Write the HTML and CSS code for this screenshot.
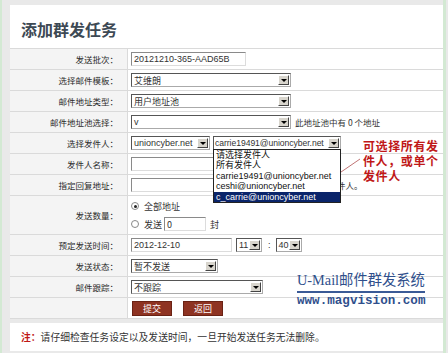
FILE: index.html
```html
<!DOCTYPE html>
<html lang="zh-CN">

<head>
    <meta charset="UTF-8">
    <title>添加群发任务</title>
    <link rel="stylesheet" href="styles.css">
</head>

<body>
    <div class="page">
        <div class="panel">
            <h1 class="title">添加群发任务</h1>
            <div class="form">
                <div class="row">
                    <div class="lbl">发送批次：</div>
                    <div class="val"><span class="inp w115">20121210-365-AAD65B</span></div>
                </div>
                <div class="row">
                    <div class="lbl">选择邮件模板：</div>
                    <div class="val"><span class="sel w160"><span class="txt">艾维朗</span><span class="arr"></span></span></div>
                </div>
                <div class="row">
                    <div class="lbl">邮件地址类型：</div>
                    <div class="val"><span class="sel w160"><span class="txt">用户地址池</span><span class="arr"></span></span></div>
                </div>
                <div class="row">
                    <div class="lbl">邮件地址池选择：</div>
                    <div class="val">
                        <span class="sel w160"><span class="txt">v</span><span class="arr"></span></span>
                        <span class="tip">此地址池中有 0 个地址</span>
                    </div>
                </div>
                <div class="row">
                    <div class="lbl">选择发件人：</div>
                    <div class="val">
                        <span class="sel w79"><span class="txt">unioncyber.net</span><span class="arr"></span></span>
                        <span class="drop-wrap">
                            <span class="sel w128"><span class="txt tight">carrie19491@unioncyber.net</span><span class="arr"></span></span>
                            <span class="drop">
                                <span class="opt">请选择发件人</span>
                                <span class="opt">所有发件人</span>
                                <span class="opt">carrie19491@unioncyber.net</span>
                                <span class="opt">ceshi@unioncyber.net</span>
                                <span class="opt on">c_carrie@unioncyber.net</span>
                            </span>
                        </span>
                    </div>
                </div>
                <div class="row">
                    <div class="lbl">发件人名称：</div>
                    <div class="val"><span class="inp w168"></span></div>
                </div>
                <div class="row">
                    <div class="lbl">指定回复地址：</div>
                    <div class="val"><span class="inp w168"></span><span class="tip">默认为发件人。</span></div>
                </div>
                <div class="row tall">
                    <div class="lbl">发送数量：</div>
                    <div class="val stack">
                        <div class="line"><span class="radio on"></span>全部地址</div>
                        <div class="line"><span class="radio"></span>发送 <span class="inp w42">0</span> 封</div>
                    </div>
                </div>
                <div class="row">
                    <div class="lbl">预定发送时间：</div>
                    <div class="val">
                        <span class="inp w101">2012-12-10</span>
                        <span class="sel w26"><span class="txt">11</span><span class="arr"></span></span>
                        <span class="colon">:</span>
                        <span class="sel w26"><span class="txt">40</span><span class="arr"></span></span>
                    </div>
                </div>
                <div class="row">
                    <div class="lbl">发送状态：</div>
                    <div class="val"><span class="sel w87"><span class="txt">暂不发送</span><span class="arr"></span></span></div>
                </div>
                <div class="row">
                    <div class="lbl">邮件跟踪：</div>
                    <div class="val"><span class="sel w132"><span class="txt">不跟踪</span><span class="arr"></span></span></div>
                </div>
                <div class="row">
                    <div class="lbl"></div>
                    <div class="val"><span class="btn">提交</span><span class="btn">返回</span></div>
                </div>
            </div>

            <!-- 标注 -->
            <div class="mark">可选择所有发<br>件人，或单个<br>发件人</div>
            <svg class="pointer" width="40" height="30" viewBox="0 0 40 30">
                <line x1="2" y1="27" x2="37" y2="3"></line>
            </svg>

            <div class="logo">
                <div class="logo-name"><span class="en">U-Mail</span>邮件群发系统</div>
                <div class="logo-url">www.magvision.com</div>
            </div>
        </div>

        <div class="note"><b>注：</b>请仔细检查任务设定以及发送时间，一旦开始发送任务无法删除。</div>
    </div>
</body>

</html>
```

FILE: styles.css
```css
html,
body {
    margin: 0;
    padding: 0;
    height: 100%;
}

body {
    background: #e9e9e9;
    font-family: "Liberation Sans", "Noto Sans CJK SC", sans-serif;
    color: #333;
    overflow: hidden;
}

.page {
    margin-right: 2px;
    height: 353px;
    box-sizing: border-box;
    padding: 5px 0 0 8px;
    border-left: 2px solid #d3e9d3;
    border-right: 3px solid #d3e9d3;
}

.panel {
    position: relative;
    background: #fff;
}

.title {
    margin: 0;
    height: 43px;
    padding: 15px 0 0 11px;
    box-sizing: border-box;
    font-family: "Noto Sans CJK SC", sans-serif;
    font-size: 16px;
    line-height: 18px;
    font-weight: 700;
    color: #3d4954;
}

.form {
    border-top: 1px solid #dadada;
}

.row {
    display: flex;
    height: 21px;
    box-sizing: border-box;
    border-bottom: 1px solid #dadada;
}

.row.tall {
    height: 39px;
}

.lbl {
    width: 118px;
    flex: none;
    box-sizing: border-box;
    background: #f4f4f4;
    border-right: 1px solid #dadada;
    padding-right: 9px;
    font-family: "Noto Sans CJK SC", sans-serif;
    font-size: 8.5px;
    color: #2a2a2a;
    display: flex;
    align-items: center;
    justify-content: flex-end;
}

.val {
    flex: 1;
    display: flex;
    align-items: center;
    padding-left: 3px;
    font-size: 9px;
}

.val.stack {
    flex-direction: column;
    align-items: flex-start;
    justify-content: center;
    gap: 3px;
    font-family: "Noto Sans CJK SC", sans-serif;
}

.line {
    display: flex;
    align-items: center;
    height: 15px;
}

/* 输入框 */
.inp {
    display: inline-flex;
    align-items: center;
    height: 14px;
    box-sizing: border-box;
    padding-left: 2px;
    border: 1px solid;
    border-color: #8a8a8a #dcdcdc #dcdcdc #8a8a8a;
    background: #fff;
    font-size: 9px;
    white-space: nowrap;
}

/* 下拉框 */
.sel {
    display: inline-flex;
    align-items: center;
    height: 14px;
    box-sizing: border-box;
    border: 1px solid;
    border-color: #555 #aaa #aaa #555;
    background: #fff;
    font-size: 9px;
}

.sel .txt {
    flex: 1;
    padding-left: 2px;
    overflow: hidden;
    white-space: nowrap;
    font-family: "Liberation Sans", "Noto Sans CJK SC", sans-serif;
}

.sel .txt.tight {
    padding-left: 1px;
    font-size: 8.6px;
    letter-spacing: -0.05px;
}

.sel .arr {
    position: relative;
    flex: none;
    width: 11px;
    height: 10px;
    margin-right: 1px;
    box-sizing: border-box;
    background: #d8d5cd;
    border: 1px solid;
    border-color: #fff #444 #444 #fff;
}

.sel .arr:after {
    content: "";
    position: absolute;
    left: 2px;
    top: 3px;
    border-left: 3px solid transparent;
    border-right: 3px solid transparent;
    border-top: 3px solid #000;
}

.w26 { width: 26px; }
.w42 { width: 42px; }
.w79 { width: 79px; }
.w87 { width: 87px; }
.w101 { width: 101px; }
.w115 { width: 115px; }
.w128 { width: 128px; }
.w132 { width: 132px; }
.w160 { width: 160px; }
.w168 { width: 168px; }

.tip {
    margin-left: 4px;
    font-family: "Noto Sans CJK SC", sans-serif;
    font-size: 8.5px;
    white-space: nowrap;
}

.colon {
    margin: 0 5px 0 6px;
}

.inp + .sel {
    margin-left: 4px;
}

.drop-wrap {
    position: relative;
    margin-left: 3px;
    display: inline-flex;
}

.drop {
    position: absolute;
    left: 0;
    top: 13px;
    width: 128px;
    height: 54px;
    box-sizing: border-box;
    border: 1px solid #222;
    background: #fff;
    z-index: 5;
    display: flex;
    flex-direction: column;
}

.opt {
    display: block;
    height: 10.4px;
    line-height: 10px;
    padding-left: 2px;
    font-size: 9px;
    font-family: "Liberation Sans", "Noto Sans CJK SC", sans-serif;
    white-space: nowrap;
    color: #111;
}

.opt.on {
    background: #0a246a;
    color: #fff;
}

.radio {
    display: inline-block;
    width: 8px;
    height: 8px;
    box-sizing: border-box;
    border-radius: 50%;
    border: 1px solid #888;
    background: #fff;
    margin-right: 5px;
    position: relative;
}

.radio.on:after {
    content: "";
    position: absolute;
    left: 1.5px;
    top: 1.5px;
    width: 3px;
    height: 3px;
    border-radius: 50%;
    background: #222;
}

.line .inp {
    margin: 0 4px 0 2px;
}

.btn {
    display: inline-flex;
    align-items: center;
    justify-content: center;
    width: 40px;
    height: 15px;
    margin: 0 10px 0 1px;
    box-sizing: border-box;
    background: #8e3322;
    border: 1px solid #6a2214;
    color: #fff;
    font-family: "Noto Sans CJK SC", sans-serif;
    font-size: 9px;
}

.mark {
    position: absolute;
    left: 353px;
    top: 133px;
    font-family: "Noto Sans CJK SC", sans-serif;
    font-size: 12px;
    line-height: 15px;
    font-weight: 700;
    color: #c01818;
    letter-spacing: 0.6px;
}

.pointer {
    position: absolute;
    left: 313px;
    top: 151px;
}

.pointer line {
    stroke: #b05050;
    stroke-width: 0.8;
}

.logo {
    position: absolute;
    left: 287px;
    top: 264px;
    color: #2f4f8c;
}

.logo-name {
    font-family: "Noto Sans CJK SC", sans-serif;
    font-size: 14.3px;
    line-height: 20px;
    padding-bottom: 1px;
    border-bottom: 2px solid #3a5a96;
    white-space: nowrap;
}

.logo-name .en {
    font-family: "Liberation Serif", serif;
}

.logo-url {
    font-family: "Liberation Mono", monospace;
    font-size: 12.6px;
    font-weight: 700;
    line-height: 16px;
    white-space: nowrap;
}

.note {
    margin-top: 4px;
    height: 28px;
    background: #fff;
    padding-left: 11px;
    display: flex;
    align-items: center;
    font-family: "Noto Sans CJK SC", sans-serif;
    font-size: 9.8px;
    color: #333;
}

.note b {
    color: #c01818;
}
```
